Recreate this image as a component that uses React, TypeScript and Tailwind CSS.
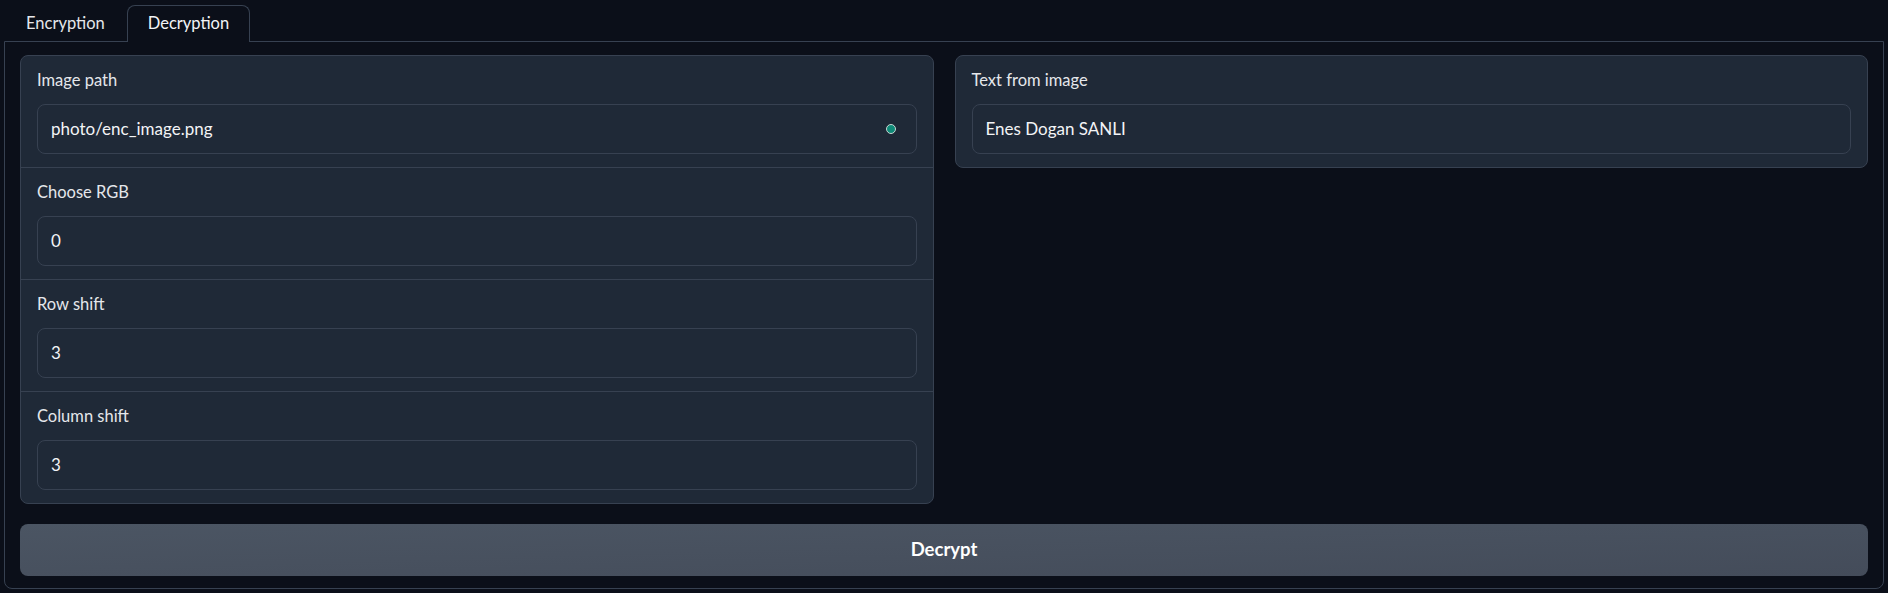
import React from 'react'

const font = { fontFamily: 'Lato, "Noto Sans", sans-serif' }

function Field({ label, value, dot }: { label: string; value: string; dot?: boolean }) {
  return (
    <div className="px-4 pt-3 pb-[13px]">
      <div className="h-6 leading-6 text-[16.5px] text-[#e5e7eb] mb-3">{label}</div>
      <div className="h-[50px] rounded-lg border border-[#374151] bg-[#1f2937] pl-[13px] pr-5 flex items-center justify-between">
        <span className="text-[17px] text-[#f3f4f6]">{value}</span>
        {dot && <span className="w-[10px] h-[10px] rounded-full bg-[#0f8a78] border border-[#c9d6d3]" />}
      </div>
    </div>
  )
}

export default function App() {
  return (
    <div className="min-h-screen bg-[#0b0f19] px-1 pt-[5px]" style={font}>
      {/* tab strip */}
      <div className="flex items-end h-9">
        <button className="h-9 px-[22px] text-[16.5px] text-[#e5e7eb]">Encryption</button>
        <button className="h-[37px] -mb-px relative z-10 px-5 pb-px text-[16.5px] text-[#f3f4f6] bg-[#0b0f19] border border-b-0 border-[#374151] rounded-t-lg">
          Decryption
        </button>
      </div>

      <div className="border border-[#374151] rounded-b-lg px-[15px] pt-[13px] pb-[12px] flex flex-col gap-5">
        <div className="grid grid-cols-2 gap-[21px] items-start">
          <div className="rounded-lg border border-[#374151] bg-[#1f2937] divide-y divide-[#374151]">
            <Field label="Image path" value="photo/enc_image.png" dot />
            <Field label="Choose RGB" value="0" />
            <Field label="Row shift" value="3" />
            <Field label="Column shift" value="3" />
          </div>
          <div className="rounded-lg border border-[#374151] bg-[#1f2937]">
            <Field label="Text from image" value="Enes Dogan SANLI" />
          </div>
        </div>

        <button className="h-[52px] rounded-lg bg-gradient-to-br from-[#4b5563] to-[#444c5a] text-[18.5px] font-bold text-white">
          Decrypt
        </button>
      </div>
    </div>
  )
}
